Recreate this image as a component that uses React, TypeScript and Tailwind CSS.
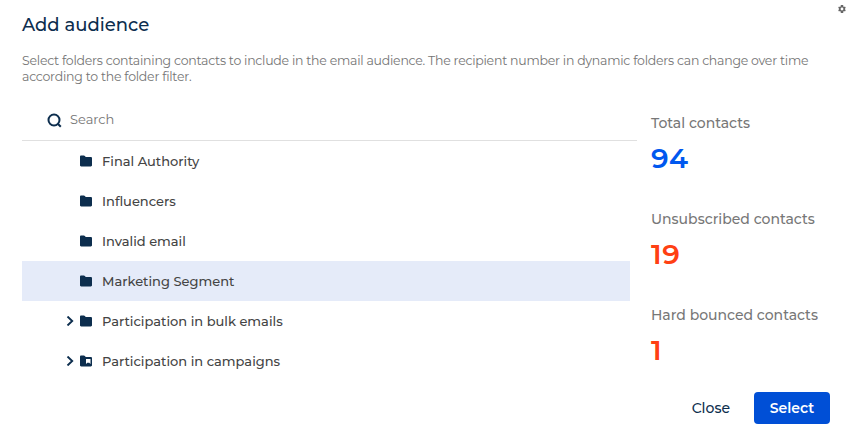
type Folder = {
    name: string;
    expandable?: boolean;
    dynamic?: boolean;
    selected?: boolean;
};

type Stat = {
    label: string;
    value: number;
    color: string;
};

const folders: Folder[] = [
    { name: "Final Authority" },
    { name: "Influencers" },
    { name: "Invalid email" },
    { name: "Marketing Segment", selected: true },
    { name: "Participation in bulk emails", expandable: true },
    { name: "Participation in campaigns", expandable: true, dynamic: true },
];

const stats: Stat[] = [
    { label: "Total contacts", value: 94, color: "text-[#0058ef]" },
    { label: "Unsubscribed contacts", value: 19, color: "text-[#ff4013]" },
    { label: "Hard bounced contacts", value: 1, color: "text-[#ff4013]" },
];

const FolderIcon = ({ dynamic }: { dynamic?: boolean }) => (
    <svg width="12" height="12" viewBox="0 0 12 12" className="shrink-0">
        <path
            d="M1.2 0.4h2.6c.5 0 .8.200 1.100.600l.8 1H10.800c.7 0 1.200.5 1.200 1.200v7c0 .7-.5 1.200-1.200 1.200H1.200C.5 11.400 0 10.900 0 10.200V1.600C0 .9.500.4 1.200.4z"
            fill="#0d2e4e"
        />
        {dynamic && (
            <path d="M6 4h4.500v5L9.200 7.700H7.300L6 9z" fill="#fff" />
        )}
    </svg>
);

const FolderRow = ({ folder }: { folder: Folder }) => (
    <li
        className={`flex h-10 w-[608px] items-center pl-11 ${folder.selected ? "bg-[#e5ebf9]" : ""}`}
    >
        <span className="w-3.5 shrink-0">
            {folder.expandable && (
                <svg width="8" height="10" viewBox="0 0 8 10" fill="none">
                    <path d="M1.5 0.5 6.200 5 1.5 9.500" stroke="#0d2e4e" strokeWidth="1.9" />
                </svg>
            )}
        </span>
        <FolderIcon dynamic={folder.dynamic} />
        <span className="ml-2.5 whitespace-nowrap pt-0.5 text-[13px] font-medium text-[#444]">
            {folder.name}
        </span>
    </li>
);

const App = () => {
    return (
        <div className="flex h-[445px] w-[852px] flex-col bg-white pl-[22px] font-['Montserrat',Inter,sans-serif]">
            {/* Header */}
            <header className="flex h-[52px] justify-between">
                <h1 className="pt-[11px] text-[18px] font-medium leading-7 text-[#0d2e4e]">
                    Add audience
                </h1>
                <button type="button" aria-label="Settings" className="mr-1.5 mt-[5px] h-2">
                    <svg width="8" height="8" viewBox="2 2 20 20" fill="#666">
                        <path d="M19.4 13a7.5 7.5 0 0 0 0-2l2.1-1.6-2-3.5-2.5 1a7 7 0 0 0-1.7-1L15 2H9l-.4 3.9a7 7 0 0 0-1.7 1l-2.5-1-2 3.5L4.6 11a7.5 7.5 0 0 0 0 2l-2.2 1.6 2 3.5 2.5-1a7 7 0 0 0 1.7 1L9 22h6l.3-3.9a7 7 0 0 0 1.7-1l2.5 1 2-3.5zM12 15.5a3.5 3.5 0 1 1 0-7 3.5 3.5 0 0 1 0 7z" />
                    </svg>
                </button>
            </header>

            <p className="h-[47px] whitespace-nowrap pt-px text-[12.5px] leading-4 tracking-[-0.24px] text-[#757575]">
                Select folders containing contacts to include in the email audience. The recipient number in dynamic folders can change over time
                <br />
                according to the folder filter.
            </p>

            <main className="flex h-[282px]">
                {/* Folder list */}
                <section className="w-[615px]">
                    <label className="flex h-[42px] items-center border-b border-[#e0e0e0] pl-[25px]">
                        <svg width="15" height="15" viewBox="0 0 15 15" fill="none" stroke="#0d2e4e" strokeWidth="2" className="mt-0.5">
                            <circle cx="7" cy="7" r="5.5" />
                            <path d="m10.5 10.5 3.3 3.3" />
                        </svg>
                        <input
                            type="text"
                            placeholder="Search"
                            className="ml-2 w-40 text-[13px] outline-none placeholder:text-[#757575]"
                        />
                    </label>
                    <ul>
                        {folders.map((folder) => (
                            <FolderRow key={folder.name} folder={folder} />
                        ))}
                    </ul>
                </section>

                {/* Totals */}
                <aside className="pl-3.5 pt-3.5">
                    {stats.map((stat) => (
                        <div key={stat.label} className="h-24 whitespace-nowrap">
                            <div className="text-[14px] font-medium leading-5 text-[#777]">
                                {stat.label}
                            </div>
                            <div className={`mt-[7px] text-[28px] font-semibold leading-9 tracking-[0.5px] ${stat.color}`}>
                                {stat.value}
                            </div>
                        </div>
                    ))}
                </aside>
            </main>

            <footer className="mr-[22px] mt-[11px] flex justify-end">
                <button type="button" className="h-8 px-6 text-[14px] font-medium text-[#0d2e4e]">
                    Close
                </button>
                <button type="button" className="h-8 w-[76px] rounded bg-[#004fd6] text-[14px] font-semibold text-white">
                    Select
                </button>
            </footer>
        </div>
    );
};

export default App;
